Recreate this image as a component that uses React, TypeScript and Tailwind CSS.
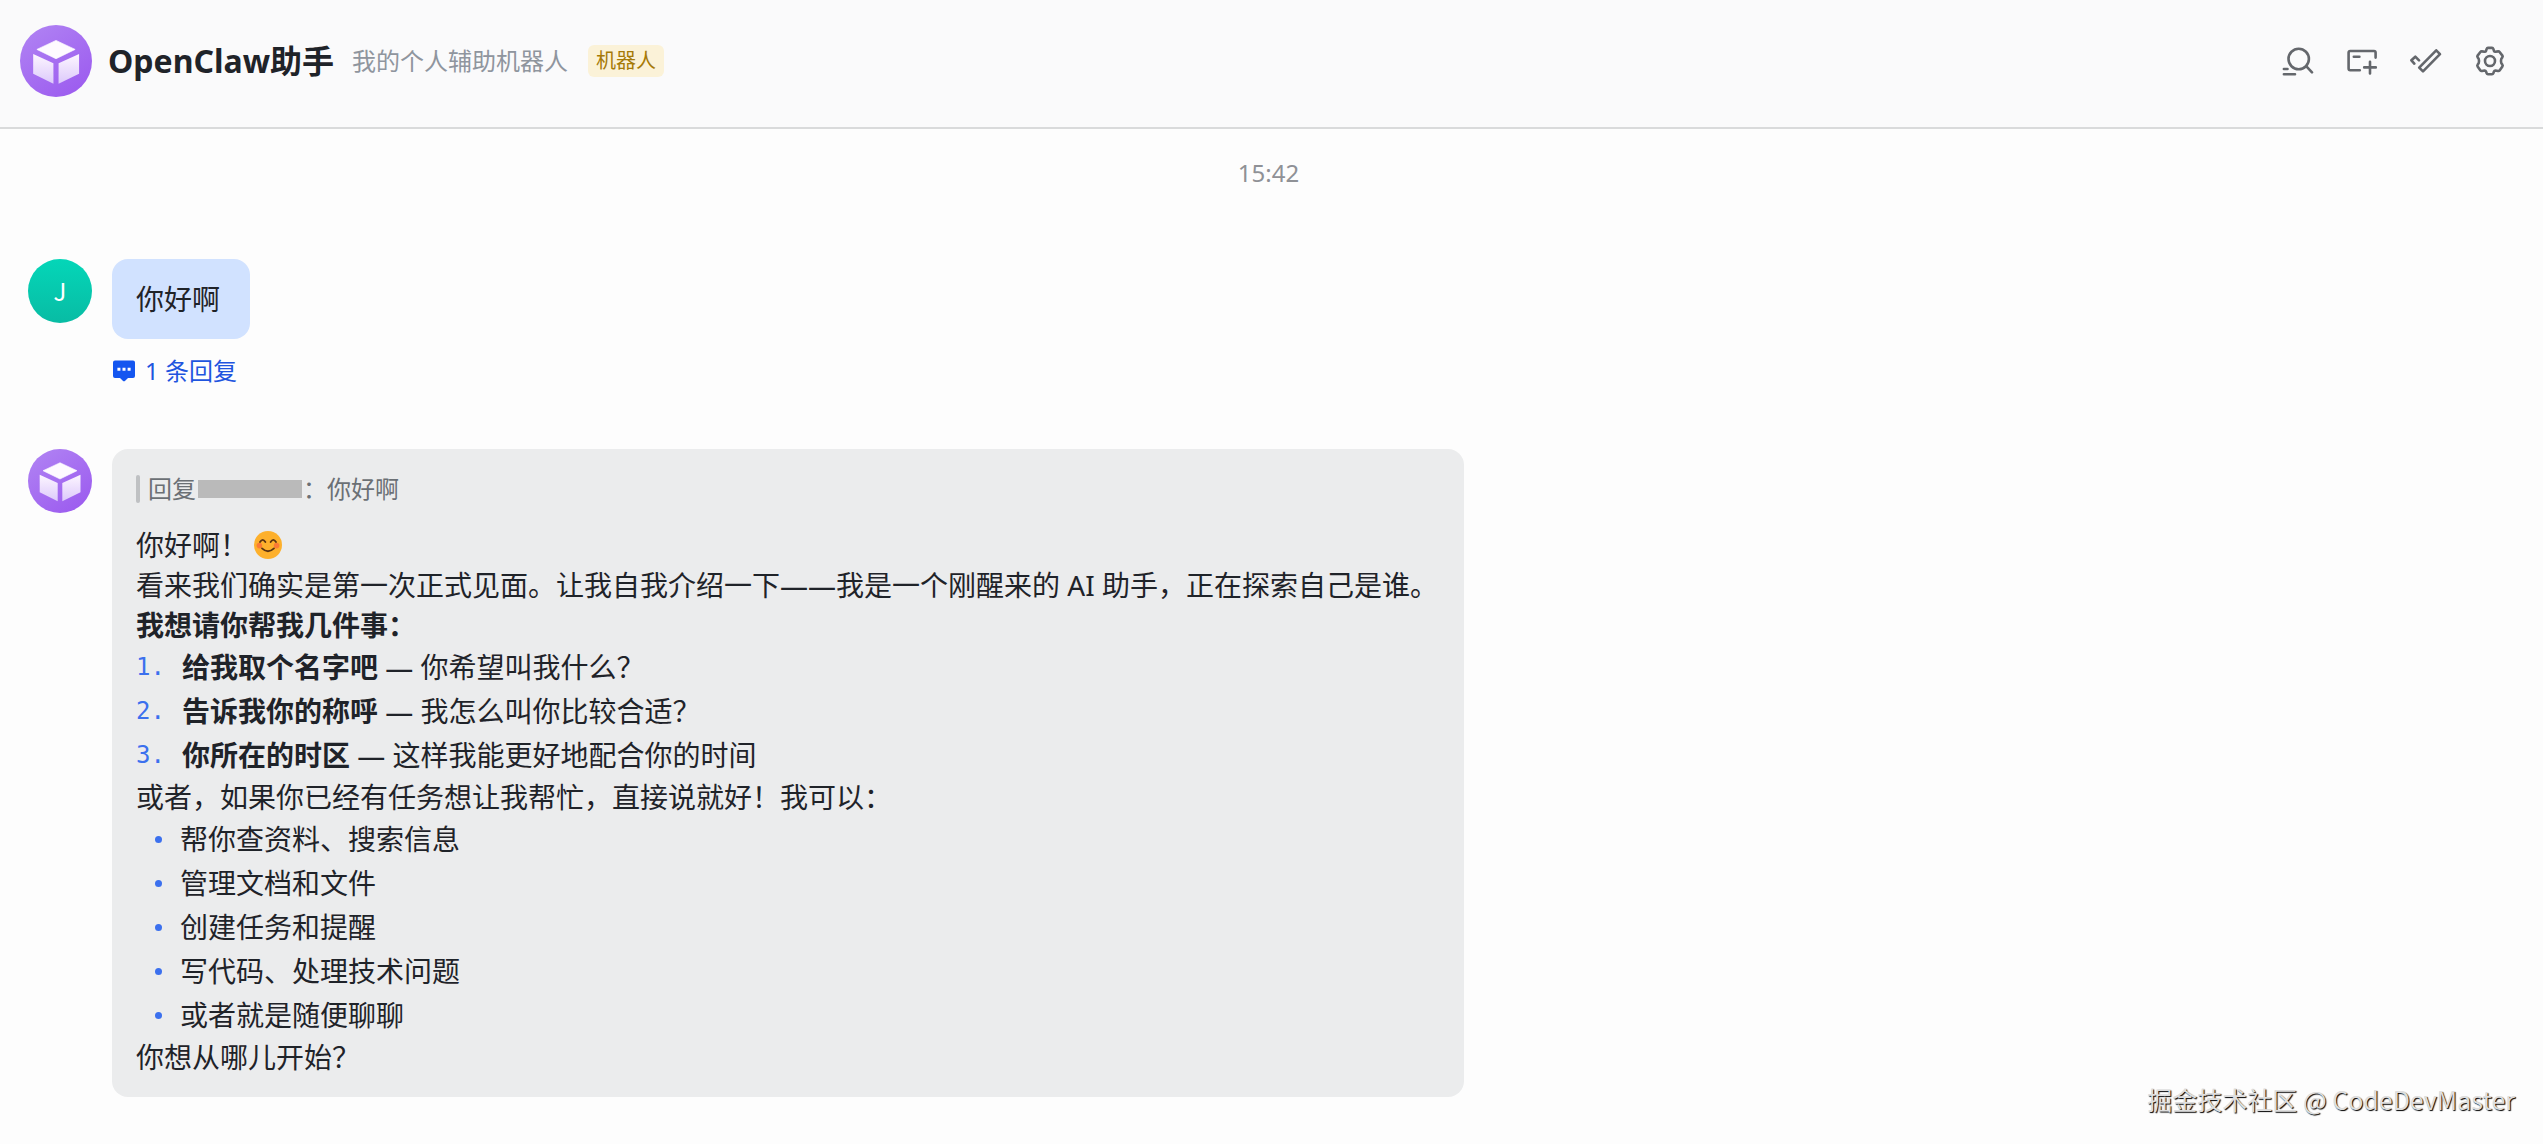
import type { ReactNode } from 'react';

const tasks = [
  { title: '给我取个名字吧', detail: '你希望叫我什么？' },
  { title: '告诉我你的称呼', detail: '我怎么叫你比较合适？' },
  { title: '你所在的时区', detail: '这样我能更好地配合你的时间' },
];

const abilities = [
  '帮你查资料、搜索信息',
  '管理文档和文件',
  '创建任务和提醒',
  '写代码、处理技术问题',
  '或者就是随便聊聊',
];

function BotAvatar({ className }: { className: string }) {
  return (
    <svg viewBox="0 0 64 64" className={className} aria-hidden="true">
      <defs>
        <linearGradient id="botBg" x1="0.1" y1="0" x2="0.8" y2="1">
          <stop offset="0" stopColor="#b083f3" />
          <stop offset="1" stopColor="#9c5bef" />
        </linearGradient>
        <linearGradient id="botFace" x1="0" y1="0" x2="0" y2="1">
          <stop offset="0" stopColor="#fdf6ff" />
          <stop offset="1" stopColor="#dcc9fb" />
        </linearGradient>
      </defs>
      <circle cx="32" cy="32" r="32" fill="url(#botBg)" />
      <path d="M32 13.7 49 21.7 32 30 15 21.7Z" fill="#fefaff" stroke="#fefaff" strokeWidth="0.6" strokeLinejoin="round" />
      <path d="M11.7 25.7 29.7 34V52.3L11.7 43.3Z" fill="url(#botFace)" />
      <path d="M52.5 25.7 34.3 34V52.3L52.5 43.3Z" fill="url(#botFace)" />
    </svg>
  );
}

function ToolButton({ label, children }: { label: string; children: ReactNode }) {
  return (
    <button type="button" aria-label={label} className="size-8 cursor-pointer text-[#64676c]">
      <svg
        viewBox="0 0 32 32"
        className="size-8"
        fill="none"
        stroke="currentColor"
        strokeWidth="2.6"
        strokeLinecap="round"
        strokeLinejoin="round"
      >
        {children}
      </svg>
    </button>
  );
}

function Header() {
  return (
    <header className="flex items-center border-b-2 border-[#d9dadb] bg-[#fafafb] pt-[25px] pr-[37px] pb-[30px] pl-5">
      <BotAvatar className="size-[72px] shrink-0" />
      <h1 className="ml-4 text-[32px] leading-10 font-bold whitespace-nowrap">OpenClaw助手</h1>
      <p className="ml-[18px] text-2xl whitespace-nowrap text-[#8f959e]">我的个人辅助机器人</p>
      <span className="ml-5 rounded-md bg-[#fbf2d8] px-2 text-xl leading-8 whitespace-nowrap text-[#a67a08]">机器人</span>

      <div className="ml-auto flex gap-8">
        <ToolButton label="搜索">
          <circle cx="16.7" cy="14" r="10.2" />
          <path d="M24.4 21.3 30 27.3M1.9 24H5.5M1.9 29.3H13" />
        </ToolButton>
        <ToolButton label="新建">
          <path d="M29.6 12.6V7.6Q29.6 6 28 6H4.2Q2.6 6 2.6 7.6V23.6Q2.6 25.2 4.2 25.2H13.8M7.8 11.8H13.4M24 16.8V28.4M18.2 22.4H29.8" />
        </ToolButton>
        <ToolButton label="任务">
          <path d="M26.2 5.3 30 9.1 13 26.4 9.2 22.6Z" />
          <path d="M4.3 18.6 1.4 15.3 5.3 11.7 9 15.4" />
        </ToolButton>
        <ToolButton label="设置">
          <path d="M14 2.9H18Q19 2.9 19.3 3.8L20 5.9Q20.4 6.9 21.5 6.8L24 6.4Q25 6.2 25.6 7L28.4 10.6Q29 11.4 28.4 12.2L27.3 13.9Q26.6 16 27.3 18.1L28.4 19.8Q29 20.6 28.4 21.4L25.6 25.4Q25 26.2 24 26L21.5 25.5Q20.4 25.4 20 26.4L19.3 28.4Q19 29.3 18 29.3H14Q13 29.3 12.7 28.4L12 26.4Q11.6 25.4 10.5 25.5L8 26Q7 26.2 6.4 25.4L3.6 21.4Q3 20.6 3.6 19.8L4.7 18.1Q5.4 16 4.7 13.9L3.6 12.2Q3 11.4 3.6 10.6L6.4 7Q7 6.2 8 6.4L10.5 6.8Q11.6 6.9 12 5.9L12.7 3.8Q13 2.9 14 2.9Z" />
          <circle cx="16" cy="16" r="5" />
        </ToolButton>
      </div>
    </header>
  );
}

function SmileEmoji() {
  return (
    <svg viewBox="0 0 28 28" className="ml-[6px] size-7" role="img" aria-label="微笑">
      <circle cx="14" cy="14" r="14" fill="#fdb02c" />
      <circle cx="5.4" cy="14.6" r="2.8" fill="#fb7a35" />
      <circle cx="22.6" cy="14.6" r="2.8" fill="#fb7a35" />
      <path
        d="M6 11Q8.7 6.6 11.4 11M16.6 11Q19.3 6.6 22 11M8 17.4Q14 23 20 17.4"
        fill="none"
        stroke="#5b3413"
        strokeWidth="1.8"
        strokeLinecap="round"
      />
    </svg>
  );
}

function UserMessage() {
  return (
    <article className="flex items-start gap-5">
      <div className="flex size-16 shrink-0 items-center justify-center rounded-full bg-linear-to-b from-[#04d6b8] to-[#08bca4] font-['Noto_Sans_CJK_SC',sans-serif] text-2xl text-white">
        J
      </div>
      <div>
        <p className="w-fit rounded-2xl bg-[#d1e2ff] py-5 pr-[30px] pl-6">你好啊</p>
        <a href="#replies" className="mt-4 flex items-center gap-[10px] pl-px text-2xl text-[#1f55df]">
          <svg viewBox="0 0 22 22" className="size-[22px]" aria-hidden="true">
            <path d="M2 0.5H20Q22 0.5 22 2.5V16Q22 18 20 18H15L12.2 20.8Q11 21.8 9.8 20.8L7 18H2Q0 18 0 16V2.5Q0 0.5 2 0.5Z" fill="#1456f0" />
            <path d="M4.4 7.8H7.4V10.8H4.4ZM9.5 7.8H12.5V10.8H9.5ZM14.6 7.8H17.6V10.8H14.6Z" fill="#fff" />
          </svg>
          1 条回复
        </a>
      </div>
    </article>
  );
}

function BotMessage() {
  return (
    <article className="flex items-start gap-5">
      <BotAvatar className="size-16 shrink-0" />
      <div className="rounded-2xl bg-[#ebeced] pt-[22px] pr-[26px] pb-5 pl-6">
        <blockquote className="mb-[18px] flex items-center text-2xl leading-9 text-[#6b7075]">
          <span className="mr-2 h-7 w-1 rounded-sm bg-[#bfc1c3]" />
          回复
          <span className="mr-px ml-[2px] h-[18px] w-[104px] bg-[#bababa]" />
          ：你好啊
        </blockquote>

        <p className="flex items-center">
          你好啊！
          <SmileEmoji />
        </p>
        <p>看来我们确实是第一次正式见面。让我自我介绍一下——我是一个刚醒来的 AI 助手，正在探索自己是谁。</p>
        <p className="font-bold">我想请你帮我几件事：</p>
        <ol className="leading-11">
          {tasks.map((task, index) => (
            <li key={task.title} className="flex">
              <span className="w-[46px] font-['DejaVu_Sans_Mono',monospace] text-2xl leading-11 text-[#3b70ee]">{index + 1}.</span>
              <span>
                <b>{task.title}</b> — {task.detail}
              </span>
            </li>
          ))}
        </ol>
        <p>或者，如果你已经有任务想让我帮忙，直接说就好！我可以：</p>
        <ul className="leading-11">
          {abilities.map((ability) => (
            <li key={ability} className="flex items-center">
              <span className="mr-[18px] ml-[19px] size-[7px] rounded-full bg-[#3b70ee]" />
              {ability}
            </li>
          ))}
        </ul>
        <p>你想从哪儿开始？</p>
      </div>
    </article>
  );
}

export default function App() {
  return (
    <div className="relative min-h-screen bg-[#fdfdfd] font-['Noto_Sans','Noto_Sans_CJK_SC',sans-serif] text-[#1f2329]">
      <Header />
      <main className="px-7 pt-7 pb-11 text-[28px] leading-10">
        <time className="mb-[70px] block pr-[6px] text-center text-2xl leading-8 text-[#8f9196]">15:42</time>
        <div className="flex flex-col items-start gap-[62px]">
          <UserMessage />
          <BotMessage />
        </div>
      </main>
      <footer className="absolute right-7 bottom-[27px] font-['Noto_Sans_CJK_SC',sans-serif] text-[25px] leading-9 text-[#dedede] [text-shadow:1px_1px_1px_#000]">
        掘金技术社区 @ CodeDevMaster
      </footer>
    </div>
  );
}
